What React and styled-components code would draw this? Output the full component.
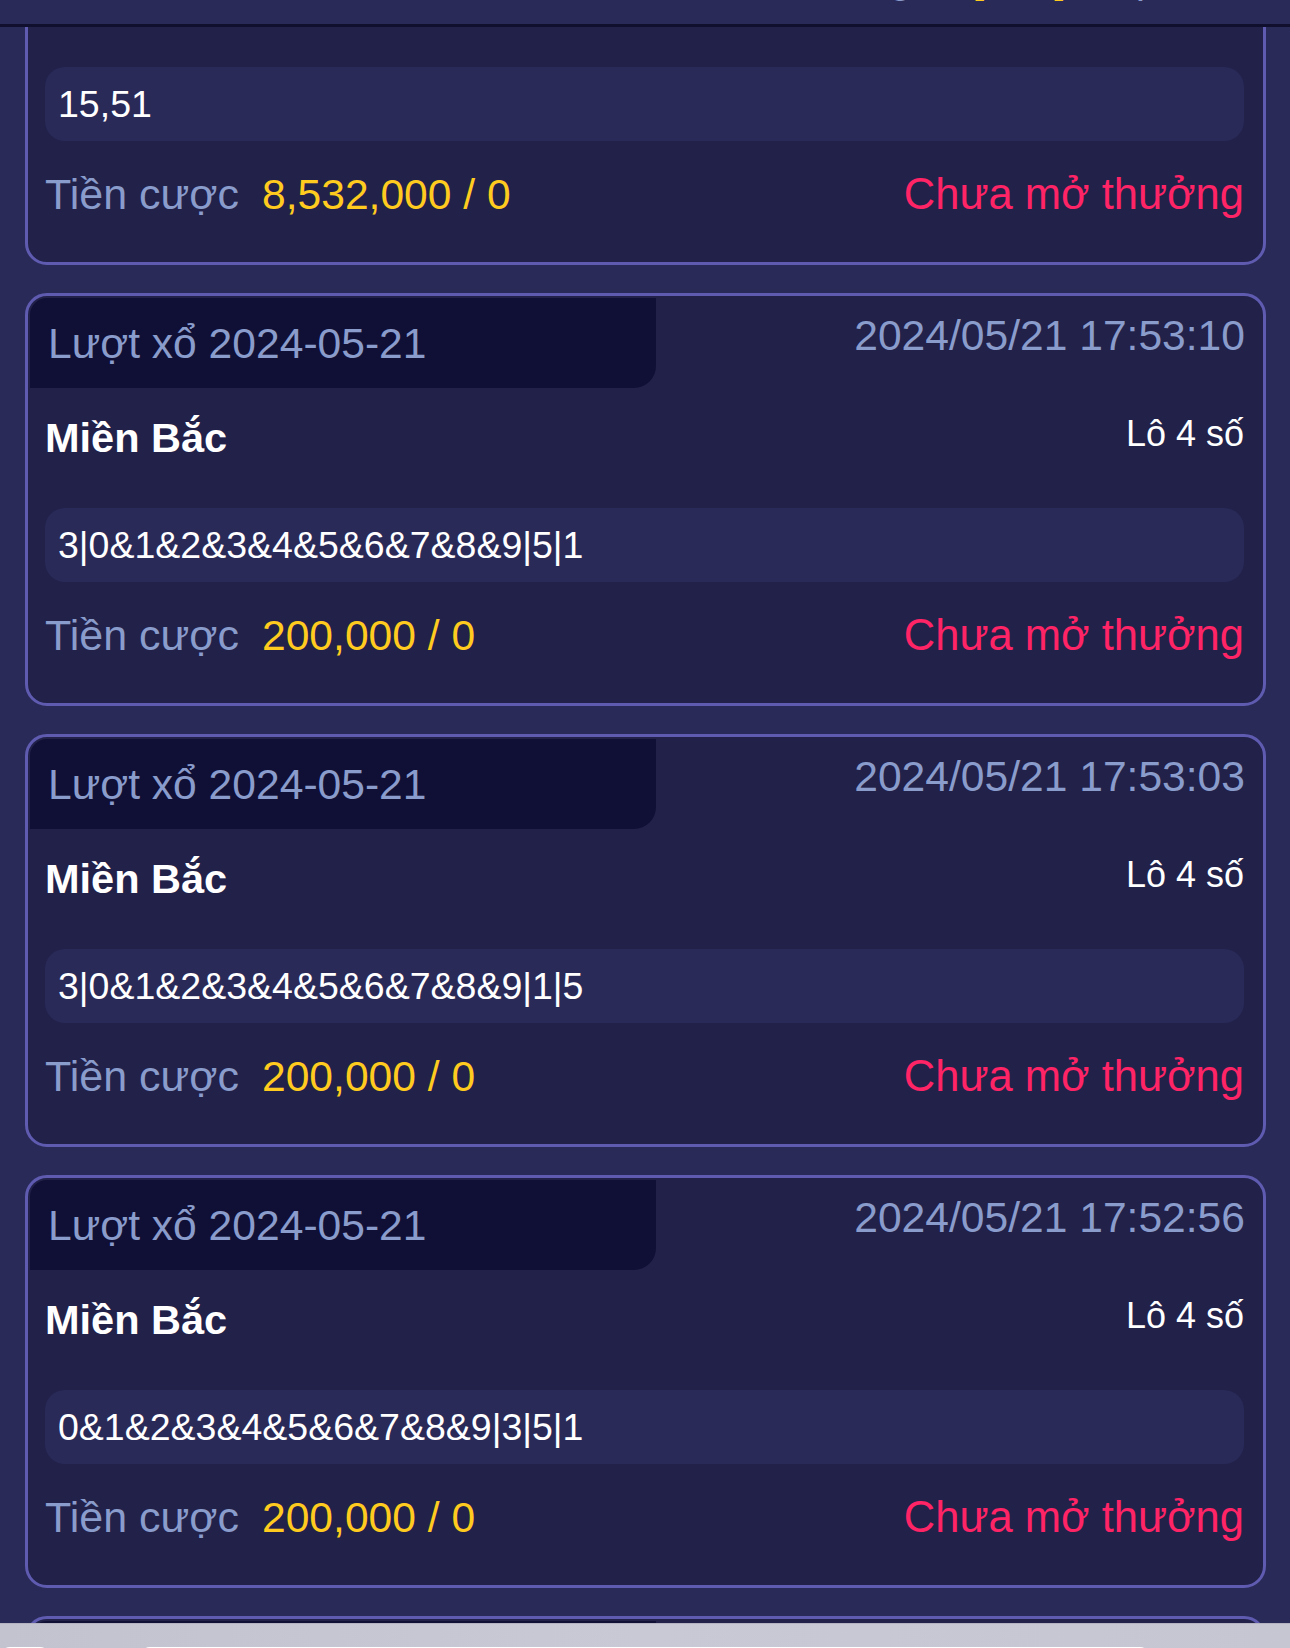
import React, { useLayoutEffect, useRef } from 'react';
import styled, { createGlobalStyle } from 'styled-components';

const c = {
  page: '#2a2a59',
  card: '#21214a',
  border: '#5f5bb0',
  tag: '#101036',
  muted: '#8a9ccb',
  yellow: '#ffcb1f',
  pink: '#ff2466',
};

const Global = createGlobalStyle`
  html, body { margin: 0; padding: 0; background: ${c.page}; }
  body { font-family: "Liberation Sans", Arial, "Noto Sans CJK SC", sans-serif; }
  * { box-sizing: border-box; }
`;

const Page = styled.div`
  height: 100vh;
  display: flex;
  flex-direction: column;
  background: ${c.page};
  overflow: hidden;
`;

const Header = styled.div`
  flex: 0 0 27px;
  background: ${c.page};
  border-bottom: 3px solid #10102e;
  overflow: hidden;
  position: relative;
  z-index: 2;
`;

const HeaderLine = styled.div`
  display: flex;
  align-items: baseline;
  padding-left: 812px;
  margin-top: -46px;
  font-size: 42px;
  line-height: 48px;
  white-space: nowrap;
`;

const HeadText = styled.span`
  color: ${(p) => (p.$hl ? c.yellow : c.muted)};
  margin-left: ${(p) => p.$gap || 0}px;
`;

const Scroller = styled.div`
  flex: 1;
  overflow-y: auto;
  scrollbar-width: none;
  &::-webkit-scrollbar { display: none; }
`;

const List = styled.div`
  display: flex;
  flex-direction: column;
  gap: 28px;
  padding: 28px 24px 28px 25px;
`;

const Card = styled.div`
  border: 3px solid ${c.border};
  border-radius: 22px;
  padding: 2px;
  background: ${c.card};
`;

const TagRow = styled.div`
  display: flex;
  justify-content: space-between;
  align-items: flex-start;
`;

const Tag = styled.div`
  width: 626px;
  height: 90px;
  background: ${c.tag};
  border-radius: 17px 0 22px 0;
  padding-left: 18px;
  font-size: 42.6px;
  line-height: 90px;
  color: ${c.muted};
`;

const Time = styled.div`
  margin-top: 13px;
  padding-right: 16px;
  font-size: 42.6px;
  line-height: 48px;
  color: ${c.muted};
`;

const Body = styled.div`
  padding: 0 17px 40px 15px;
`;

const TitleRow = styled.div`
  margin-top: 25px;
  display: flex;
  justify-content: space-between;
  align-items: flex-start;
  color: #fff;
`;

const Region = styled.div`
  font-size: 41.5px;
  font-weight: bold;
  line-height: 50px;
`;

const Kind = styled.div`
  font-size: 36px;
  line-height: 42px;
`;

const Numbers = styled.div`
  margin-top: 45px;
  height: 74px;
  display: flex;
  align-items: center;
  padding: 0 13px;
  border-radius: 20px;
  background: ${c.page};
  color: #fff;
  font-size: 37.5px;
`;

const Footer = styled.div`
  margin-top: 27px;
  display: flex;
  align-items: center;
  line-height: 52px;
`;

const Label = styled.span`
  font-size: 43px;
  color: ${c.muted};
`;

const Amount = styled.span`
  margin-left: 23px;
  font-size: 42.6px;
  color: ${c.yellow};
`;

const Status = styled.span`
  margin-left: auto;
  font-size: 43.5px;
  color: ${c.pink};
`;

const BottomBar = styled.div`
  flex: 0 0 25px;
  background: linear-gradient(90deg, #c3c2cf, #c9c8d5 50%, #c6c5d2);
  border-top: 1px solid #b4b3c2;
  display: flex;
  gap: 90px;
  padding: 23px 140px 0 0;
  overflow: hidden;
`;

const Pill = styled.div`
  height: 20px;
  width: ${(p) => p.$w}px;
  background: #fff;
  border-radius: 10px;
`;

const bets = [
  { time: '2024/05/21 17:53:18', kind: 'Lô 2 số', numbers: '15,51', amount: '8,532,000' },
  { time: '2024/05/21 17:53:10', kind: 'Lô 4 số', numbers: '3|0&1&2&3&4&5&6&7&8&9|5|1', amount: '200,000' },
  { time: '2024/05/21 17:53:03', kind: 'Lô 4 số', numbers: '3|0&1&2&3&4&5&6&7&8&9|1|5', amount: '200,000' },
  { time: '2024/05/21 17:52:56', kind: 'Lô 4 số', numbers: '0&1&2&3&4&5&6&7&8&9|3|5|1', amount: '200,000' },
  { time: '2024/05/21 17:52:49', kind: 'Lô 4 số', numbers: '0&1&2&3&4&5&6&7&8&9|3|1|5', amount: '200,000' },
  { time: '2024/05/21 17:52:41', kind: 'Lô 4 số', numbers: '0&1&2&3&4&5&6&7&8&9|1|3|5', amount: '200,000' },
];

function BetCard({ bet }) {
  return (
    <Card>
      <TagRow>
        <Tag>Lượt xổ 2024-05-21</Tag>
        <Time>{bet.time}</Time>
      </TagRow>
      <Body>
        <TitleRow>
          <Region>Miền Bắc</Region>
          <Kind>{bet.kind}</Kind>
        </TitleRow>
        <Numbers>{bet.numbers}</Numbers>
        <Footer>
          <Label>Tiền cược</Label>
          <Amount>{bet.amount} / 0</Amount>
          <Status>Chưa mở thưởng</Status>
        </Footer>
      </Body>
    </Card>
  );
}

export default function App() {
  const scroller = useRef(null);

  // the list is shown scrolled part-way down
  useLayoutEffect(() => {
    if (scroller.current) scroller.current.scrollTop = 203;
  }, []);

  return (
    <Page>
      <Global />
      <Header>
        <HeaderLine>
          <HeadText>Đang</HeadText>
          <HeadText $hl $gap={60}>[ 12 ]</HeadText>
          <HeadText $gap={70}>p</HeadText>
        </HeaderLine>
      </Header>
      <Scroller ref={scroller}>
        <List>
          {bets.map((b) => (
            <BetCard key={b.time} bet={b} />
          ))}
        </List>
      </Scroller>
      <BottomBar>
        <Pill $w={50} />
        <Pill $w={1010} />
      </BottomBar>
    </Page>
  );
}
